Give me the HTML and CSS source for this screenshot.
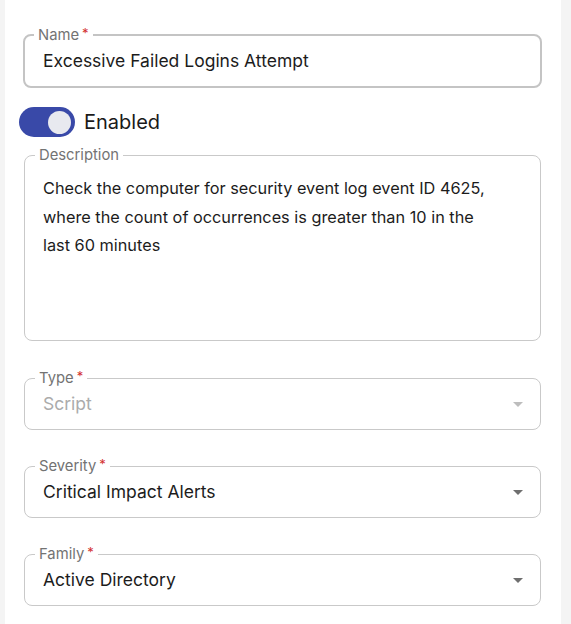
FILE: index.html
```html
<!DOCTYPE html>
<html>
<head>
<meta charset="utf-8">
<link rel="stylesheet" href="styles.css">
</head>
<body>
<div class="panel">
  <form class="form">
    <fieldset class="field field-name">
      <legend class="label">Name<span class="req">*</span></legend>
      <div class="value">Excessive Failed Logins Attempt</div>
    </fieldset>

    <div class="toggle-row">
      <span class="switch"><span class="knob"></span></span>
      <span class="toggle-text">Enabled</span>
    </div>

    <fieldset class="field field-desc">
      <legend class="label">Description</legend>
      <div class="textarea">Check the computer for security event log event ID 4625, where the count of occurrences is greater than 10 in the last 60 minutes</div>
    </fieldset>

    <fieldset class="field field-select disabled">
      <legend class="label">Type<span class="req">*</span></legend>
      <div class="select-row">
        <span class="value">Script</span>
        <svg class="arrow" viewBox="0 0 24 24" width="24" height="24"><path d="M7 10l5 5 5-5z"/></svg>
      </div>
    </fieldset>

    <fieldset class="field field-select">
      <legend class="label">Severity<span class="req">*</span></legend>
      <div class="select-row">
        <span class="value">Critical Impact Alerts</span>
        <svg class="arrow" viewBox="0 0 24 24" width="24" height="24"><path d="M7 10l5 5 5-5z"/></svg>
      </div>
    </fieldset>

    <fieldset class="field field-select">
      <legend class="label">Family<span class="req">*</span></legend>
      <div class="select-row">
        <span class="value">Active Directory</span>
        <svg class="arrow" viewBox="0 0 24 24" width="24" height="24"><path d="M7 10l5 5 5-5z"/></svg>
      </div>
    </fieldset>
  </form>
</div>
</body>
</html>
```

FILE: styles.css
```css
html, body {
  margin: 0;
  padding: 0;
}
body {
  background: #f4f4f4;
  font-family: Inter, "Noto Sans", sans-serif;
  color: #1c1c1c;
  height: 624px;
  overflow: hidden;
}
.panel {
  margin-left: 5px;
  width: 556px;
  height: 624px;
  background: #ffffff;
  box-sizing: border-box;
  padding: 28px 20px 0 19px;
}
.form {
  display: flex;
  flex-direction: column;
}
.field {
  margin: 0;
  padding: 0;
  border: 1px solid #c9c9c9;
  border-radius: 8px;
  min-width: 0;
}
.label {
  margin-left: 10px;
  padding: 0 4px;
  font-size: 14.8px;
  line-height: 14px;
  color: #737373;
}
.req {
  color: #d32f2f;
  margin-left: 3px;
  font-size: 13px;
  position: relative;
  top: -2px;
}
.field-name {
  border: 2px solid #c4c4c4;
  margin-left: -1px;
  margin-right: -1px;
}
.field-name .label {
  margin-left: 9px;
}
.value {
  font-size: 17.5px;
  line-height: 24px;
}
.field-name .value {
  padding: 7px 18px 13px 18px;
}
.toggle-row {
  display: flex;
  align-items: center;
  gap: 9px;
  margin-top: 19px;
  margin-left: -5px;
  height: 30px;
}
.switch {
  width: 56px;
  height: 30px;
  border-radius: 15px;
  background: #3949a8;
  display: flex;
  align-items: center;
  justify-content: flex-end;
  padding: 0 4px;
  box-sizing: border-box;
}
.knob {
  width: 23px;
  height: 23px;
  border-radius: 50%;
  background: #e8e9ef;
}
.toggle-text {
  font-size: 20px;
  line-height: 24px;
  color: #1a1a1a;
}
.field-desc {
  margin-top: 11px;
}
.textarea {
  padding: 12px 45px 0 18px;
  height: 178px;
  box-sizing: border-box;
  font-size: 16.3px;
  line-height: 28.7px;
}
.field-select {
  margin-top: 30px;
}
.field-select + .field-select {
  margin-top: 29px;
}
.select-row {
  display: flex;
  align-items: center;
  justify-content: space-between;
  padding: 7px 10px 13px 18px;
}
.arrow {
  fill: #6f6f6f;
  display: block;
}
.disabled .value {
  color: #ababab;
}
.disabled .arrow {
  fill: #bdbdbd;
}
```
